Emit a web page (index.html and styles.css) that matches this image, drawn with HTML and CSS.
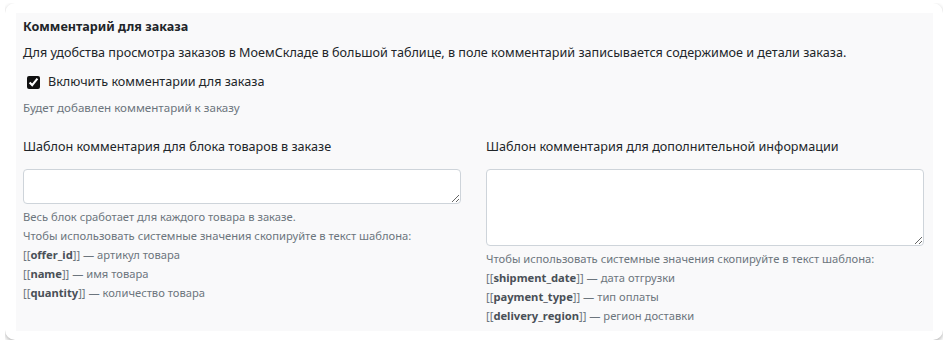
FILE: index.html
```html
<!DOCTYPE html>
<html lang="ru">
<head>
  <meta charset="UTF-8">
  <title>Комментарий для заказа</title>
  <link rel="stylesheet" href="styles.css">
</head>
<body>
  <div class="card">
    <div class="panel">
      <h3 class="title">Комментарий для заказа</h3>
      <p class="lead">Для удобства просмотра заказов в МоемСкладе в большой таблице, в поле комментарий записывается содержимое и детали заказа.</p>
      <label class="check">
        <input type="checkbox" checked>
        <span>Включить комментарии для заказа</span>
      </label>
      <p class="help">Будет добавлен комментарий к заказу</p>

      <div class="cols">
        <div class="field">
          <label class="field-label">Шаблон комментария для блока товаров в заказе</label>
          <textarea class="input input-small"></textarea>
          <div class="hint">
            <div>Весь блок сработает для каждого товара в заказе.</div>
            <div>Чтобы использовать системные значения скопируйте в текст шаблона:</div>
            <div>[[<b>offer_id</b>]] — артикул товара</div>
            <div>[[<b>name</b>]] — имя товара</div>
            <div>[[<b>quantity</b>]] — количество товара</div>
          </div>
        </div>
        <div class="field">
          <label class="field-label">Шаблон комментария для дополнительной информации</label>
          <textarea class="input input-big"></textarea>
          <div class="hint">
            <div>Чтобы использовать системные значения скопируйте в текст шаблона:</div>
            <div>[[<b>shipment_date</b>]] — дата отгрузки</div>
            <div>[[<b>payment_type</b>]] — тип оплаты</div>
            <div>[[<b>delivery_region</b>]] — регион доставки</div>
          </div>
        </div>
      </div>
    </div>
  </div>
</body>
</html>
```

FILE: styles.css
```css
body {
  margin: 3px 6px 0 5px;
  font-family: 'Noto Sans', sans-serif;
  color: #212529;
  background: #fff;
}
.card {
  background: #fff;
  border-radius: 10px;
  box-shadow: 0 2px 4px rgba(0, 0, 0, 0.3);
  padding: 10px 10px 9px 11px;
}
.panel {
  background: #f9f9fa;
  padding: 5px 9px 6px 7px;
}
.title {
  margin: 0;
  font-size: 12.6px;
  font-weight: bold;
  line-height: 18px;
}
.lead {
  margin: 8px 0 0;
  font-size: 12.6px;
  line-height: 18px;
}
.check {
  display: flex;
  align-items: center;
  gap: 8px;
  margin: 11px 0 0 4px;
  font-size: 12.6px;
  line-height: 18px;
}
.check input {
  margin: 0;
  width: 13px;
  height: 13px;
  accent-color: #111;
}
.help {
  margin: 8px 0 0;
  font-size: 11.6px;
  line-height: 18px;
  color: #6c757d;
}
.cols {
  display: grid;
  grid-template-columns: 1fr 1fr;
  gap: 25px;
  margin-top: 21px;
}
.field-label {
  display: block;
  font-size: 12.6px;
  line-height: 18px;
  margin-bottom: 13px;
}
.input {
  display: block;
  width: 100%;
  box-sizing: border-box;
  border: 1px solid #ced4da;
  border-radius: 4px;
  background: #fff;
  margin: 0;
}
.input-small { height: 35px; }
.input-big { height: 77px; }
.hint {
  margin-top: 3px;
  font-size: 11.2px;
  color: #6c757d;
}
.hint div {
  height: 19px;
  line-height: 19px;
}
.hint b {
  color: #495057;
}
```
